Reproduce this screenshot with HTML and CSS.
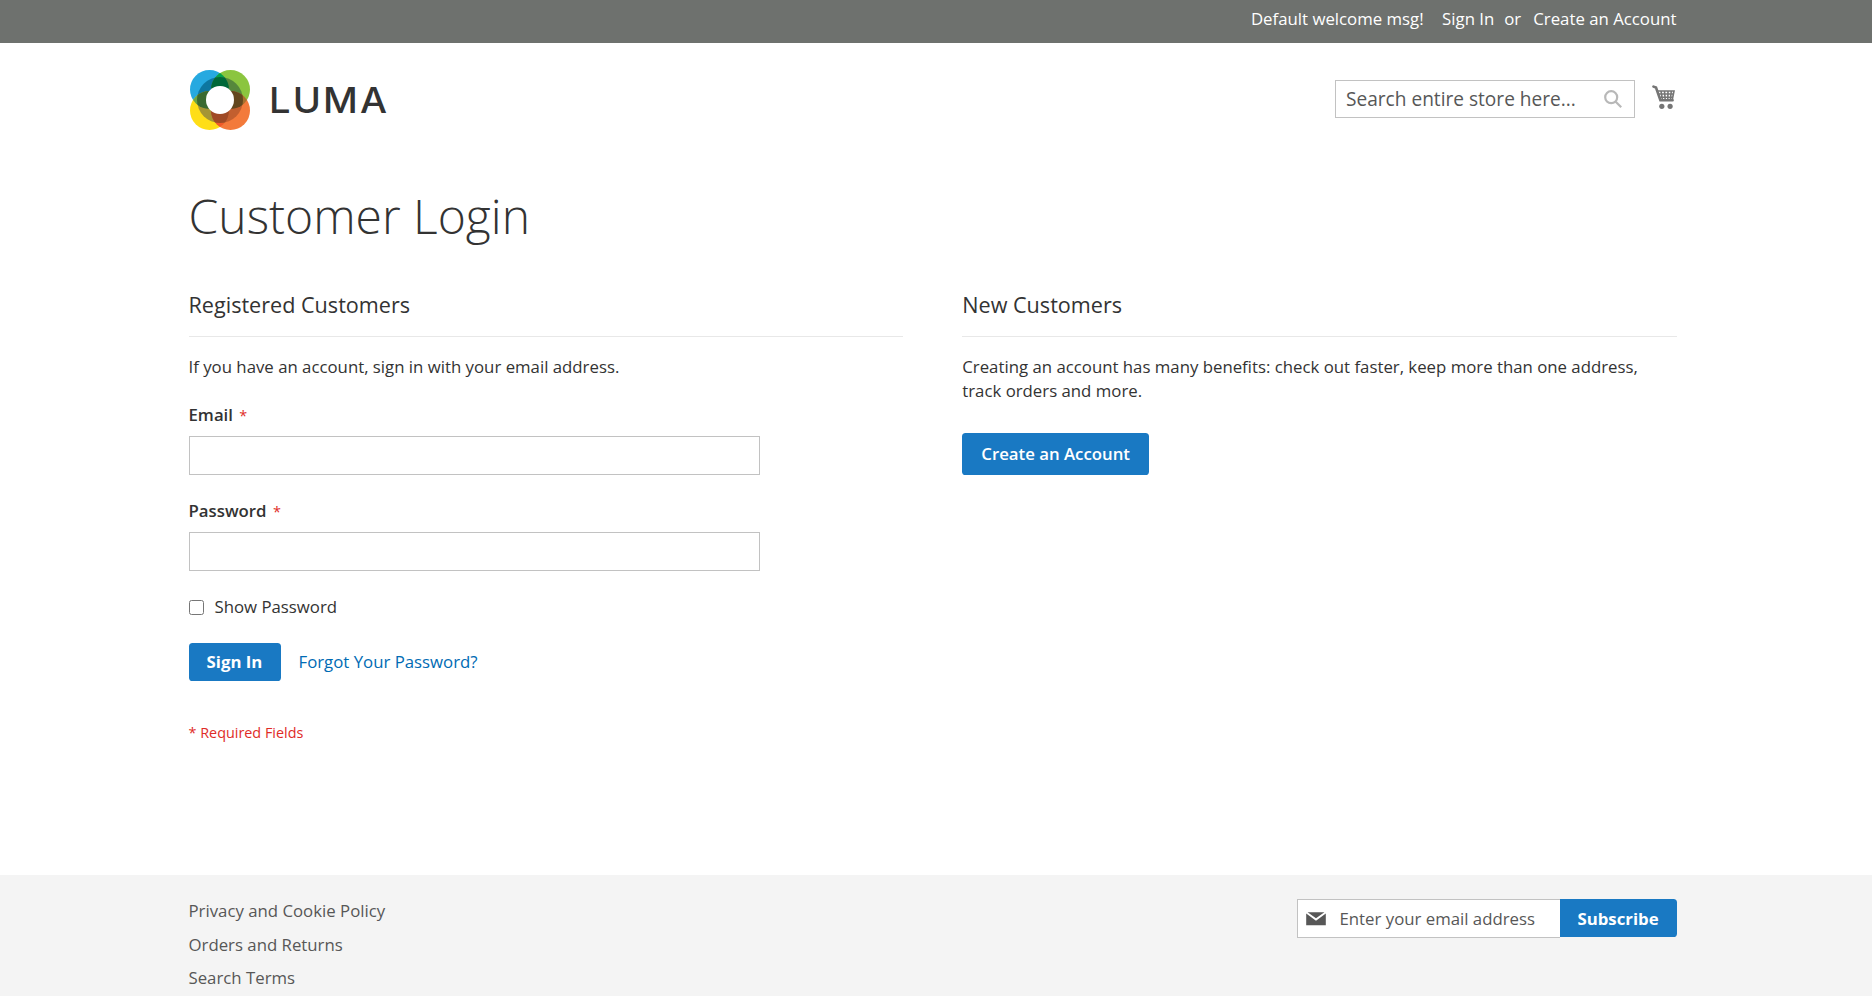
FILE: index.html
```
<!DOCTYPE html>
<html lang="en">

<head>
    <meta charset="UTF-8">
    <link rel="stylesheet" href="styles.css">
    <title>Customer Login</title>
</head>

<body>
    <header class="page-header">
        <div class="panel">
            <ul class="container header-links">
                <li class="greet">Default welcome msg!</li>
                <li><a href="#">Sign In</a></li>
                <li class="or">or</li>
                <li><a href="#">Create an Account</a></li>
            </ul>
        </div>
        <div class="container header-content">
            <a class="logo" href="#" aria-label="Luma">
                <svg class="logo-mark" viewBox="0 0 60 60">
                    <defs>
                        <clipPath id="blue"><circle cx="19.5" cy="19.5" r="19.5" /></clipPath>
                        <clipPath id="orange"><circle cx="40.5" cy="40.5" r="19.5" /></clipPath>
                        <clipPath id="ring"><circle cx="30" cy="30" r="23" /></clipPath>
                    </defs>
                    <circle cx="19.5" cy="19.5" r="19.5" fill="#26a9e0" />
                    <circle cx="40.5" cy="19.5" r="19.5" fill="#8bc53f" />
                    <circle cx="19.5" cy="40.5" r="19.5" fill="#ffde17" />
                    <circle cx="40.5" cy="40.5" r="19.5" fill="#f37a3b" />
                    <!-- overlaps outside the ring -->
                    <circle cx="40.5" cy="19.5" r="19.5" fill="#00a14b" clip-path="url(#blue)" />
                    <circle cx="19.5" cy="40.5" r="19.5" fill="#6aa545" clip-path="url(#blue)" />
                    <circle cx="40.5" cy="19.5" r="19.5" fill="#a8712e" clip-path="url(#orange)" />
                    <circle cx="19.5" cy="40.5" r="19.5" fill="#f15a29" clip-path="url(#orange)" />
                    <!-- darker ring -->
                    <g clip-path="url(#ring)">
                        <circle cx="19.5" cy="19.5" r="19.5" fill="#0d76a0" />
                        <circle cx="40.5" cy="19.5" r="19.5" fill="#56873c" />
                        <circle cx="19.5" cy="40.5" r="19.5" fill="#a59535" />
                        <circle cx="40.5" cy="40.5" r="19.5" fill="#c25f2f" />
                        <circle cx="40.5" cy="19.5" r="19.5" fill="#006838" clip-path="url(#blue)" />
                        <circle cx="19.5" cy="40.5" r="19.5" fill="#3a6a31" clip-path="url(#blue)" />
                        <circle cx="40.5" cy="19.5" r="19.5" fill="#63471e" clip-path="url(#orange)" />
                        <circle cx="19.5" cy="40.5" r="19.5" fill="#a04a25" clip-path="url(#orange)" />
                    </g>
                    <circle cx="30" cy="30" r="14" fill="#fff" />
                </svg>
                <span class="logo-text">LUMA</span>
            </a>
            <div class="header-tools">
                <form class="search">
                    <input type="text" placeholder="Search entire store here...">
                    <svg class="search-icon" viewBox="0 0 18 18">
                        <circle cx="7.2" cy="7.2" r="6" />
                        <path d="M11.5 11.5L17.2 17.2" />
                    </svg>
                </form>
                <a class="minicart" href="#" aria-label="My Cart">
                    <svg viewBox="0 0 23 24">
                        <path class="handle" d="M1.5 1.6L4 2.6L8.4 15.2H20.6" />
                        <path class="basket" d="M5 6H22L20.2 15M6.2 9H21.2M7.4 12.2H20.6M9 6L10.5 15M12.5 6L13.2 15M16 6L15.8 15M19.3 6L18.3 15" />
                        <circle cx="9.8" cy="21.3" r="2.6" />
                        <circle cx="18.1" cy="21.3" r="2.6" />
                    </svg>
                </a>
            </div>
        </div>
    </header>

    <main class="container page-main">
        <h1>Customer Login</h1>
        <div class="login-container">
            <section class="block">
                <h2>Registered Customers</h2>
                <form class="form-login">
                    <p class="note">If you have an account, sign in with your email address.</p>
                    <div class="field">
                        <label for="email">Email <span class="star">*</span></label>
                        <input type="email" id="email">
                    </div>
                    <div class="field">
                        <label for="pass">Password <span class="star">*</span></label>
                        <input type="password" id="pass">
                    </div>
                    <div class="choice">
                        <input type="checkbox" id="show-password">
                        <label for="show-password">Show Password</label>
                    </div>
                    <div class="actions">
                        <button type="button" class="btn">Sign In</button>
                        <a href="#">Forgot Your Password?</a>
                    </div>
                    <p class="required">* Required Fields</p>
                </form>
            </section>
            <section class="block">
                <h2>New Customers</h2>
                <p class="note">Creating an account has many benefits: check out faster, keep more than one address, track orders and more.</p>
                <a class="btn btn-create" href="#">Create an Account</a>
            </section>
        </div>
    </main>

    <footer class="page-footer">
        <div class="container footer-content">
            <ul class="footer-links">
                <li><a href="#">Privacy and Cookie Policy</a></li>
                <li><a href="#">Orders and Returns</a></li>
                <li><a href="#">Search Terms</a></li>
            </ul>
            <form class="newsletter">
                <div class="newsletter-field">
                    <svg viewBox="0 0 20 14">
                        <path d="M1.6 0.3H18.4L10 6.2Z" />
                        <path d="M0.2 1.6L10 8.8L19.8 1.6V13.2H0.2Z" />
                    </svg>
                    <input type="email" placeholder="Enter your email address">
                </div>
                <button type="button" class="btn">Subscribe</button>
            </form>
        </div>
    </footer>
</body>

</html>
```
FILE: styles.css
```
* {
    box-sizing: border-box;
}

body {
    margin: 0;
    height: 996px;
    overflow: hidden;
    display: flex;
    flex-direction: column;
    font-family: "Open Sans", "Liberation Sans", sans-serif;
    font-size: 16.8px;
    line-height: 24px;
    color: #333;
    background-color: #fff;
}

ul {
    list-style: none;
    margin: 0;
    padding: 0;
}

a {
    color: #006bb4;
    text-decoration: none;
}

input,
button {
    font-family: inherit;
    font-size: 16.8px;
}

.container {
    width: 1488px;
    margin-left: 188.5px;
}

.panel {
    height: 43px;
    background-color: #6e716e;
    color: #fff;
}

.header-links {
    display: flex;
    justify-content: flex-end;
    padding-top: 7px;
}

.header-links a {
    color: #fff;
}

.greet {
    margin-right: 18.5px;
}

.or {
    margin: 0 12px 0 10px;
}

.header-content {
    display: flex;
    justify-content: space-between;
    padding-top: 27px;
}

.logo {
    display: flex;
    align-items: center;
    height: 60px;
    margin-left: 1.5px;
    color: #333;
}

.logo-mark {
    width: 60px;
    height: 60px;
}

.logo-text {
    margin-left: 19px;
    font-family: Inter, sans-serif;
    font-weight: 500;
    font-size: 36px;
    letter-spacing: 2px;
    transform: scaleX(1.06);
    transform-origin: left;
}

.header-tools {
    display: flex;
    align-items: flex-start;
    padding: 10px 1.5px 0 0;
}

.search {
    display: flex;
    align-items: center;
    width: 300px;
    height: 38px;
    padding-right: 12px;
    border: 1px solid #c2c2c2;
}

.search input {
    flex: 1;
    min-width: 0;
    padding: 0 0 0 10px;
    border: none;
    outline: none;
    font-size: 19.1px;
}

input::placeholder {
    color: #575757;
    opacity: 1;
}

.search-icon {
    width: 18px;
    height: 18px;
    fill: none;
    stroke: #b8b8b8;
    stroke-width: 2.2;
}

.minicart {
    width: 23px;
    height: 24px;
    margin: 5px 0 0 17px;
}

.minicart svg {
    display: block;
    fill: #757575;
}

.minicart path {
    fill: none;
    stroke: #757575;
    stroke-width: 1.6;
}

.minicart .handle {
    stroke-width: 2.6;
    stroke-linecap: round;
}

.page-main {
    flex: 1;
}

h1 {
    margin: 59px 0 0;
    font-size: 48px;
    font-weight: 300;
    line-height: 53px;
}

.login-container {
    display: flex;
    justify-content: space-between;
    margin-top: 51px;
}

.block {
    width: 714.24px;
}

h2 {
    margin: 0 0 18px;
    padding-bottom: 19px;
    border-bottom: 1px solid #e8e8e8;
    font-size: 21.6px;
    font-weight: 400;
    line-height: 24px;
}

.note {
    margin: 0 0 24px;
}

.field {
    margin-bottom: 24px;
}

.field label {
    display: block;
    margin-bottom: 9px;
    font-weight: 600;
}

.star {
    margin-left: 2px;
    font-size: 14.4px;
    font-weight: 400;
    line-height: 1;
    color: #e02b27;
}

.field input {
    display: block;
    width: 571px;
    height: 39px;
    border: 1px solid #c2c2c2;
    padding: 0 11px;
}

.choice {
    display: flex;
    align-items: center;
}

.choice input {
    width: 15px;
    height: 15px;
    margin: 0 11px 0 0;
}

.actions {
    display: flex;
    align-items: center;
    margin-top: 24px;
}

.btn {
    height: 38px;
    padding: 0 18px 1px;
    border: none;
    border-radius: 3.6px;
    background-color: #1979c3;
    color: #fff;
    font-weight: 700;
    cursor: pointer;
}

.btn:hover {
    background-color: #006bb4;
}

.actions .btn {
    width: 92px;
}

.actions a {
    margin-left: 18px;
}

.required {
    margin: 40px 0 0;
    font-size: 14.4px;
    color: #e02b27;
}

.btn-create {
    display: inline-block;
    height: 42px;
    margin-top: 6px;
    padding: 0 19px;
    line-height: 42px;
    font-weight: 600;
}

.page-footer {
    height: 121px;
    background-color: #f4f4f4;
}

.footer-content {
    display: flex;
    justify-content: space-between;
    align-items: flex-start;
    padding-top: 24px;
}

.footer-links li {
    margin-bottom: 9.6px;
}

.footer-links a {
    color: #575757;
}

.newsletter {
    display: flex;
    align-items: flex-start;
}

.newsletter-field {
    display: flex;
    align-items: center;
    width: 263px;
    height: 39px;
    padding-left: 8px;
    border: 1px solid #c2c2c2;
    border-right: none;
    background-color: #fff;
}

.newsletter-field svg {
    width: 20px;
    height: 14px;
    flex: none;
    fill: #575757;
}

.newsletter-field input {
    flex: 1;
    min-width: 0;
    padding: 0 0 0 14px;
    border: none;
    outline: none;
}

.newsletter .btn {
    width: 117px;
    padding: 0;
    border-radius: 0 3.6px 3.6px 0;
}
```
